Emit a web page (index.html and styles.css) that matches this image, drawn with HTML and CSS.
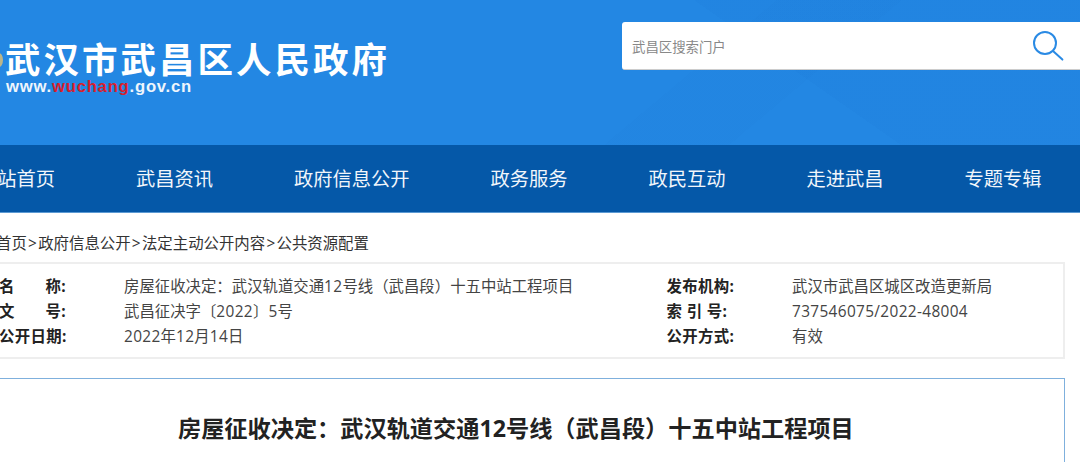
FILE: index.html
```html
<!DOCTYPE html>
<html lang="zh-CN">
<head>
<meta charset="utf-8">
<title>房屋征收决定</title>
<link rel="stylesheet" href="styles.css">
</head>
<body>
<header class="top">
  <div class="seal"></div>
  <div class="brand">
    <div class="brand-name">武汉市武昌区人民政府</div>
    <div class="brand-url">www.<span class="red">wuchang</span>.gov.cn</div>
  </div>
  <div class="search">
    <span class="search-text">武昌区搜索门户</span>
    <svg class="search-icon" width="32" height="32" viewBox="0 0 32 32" fill="none" stroke="#2a8ae4" stroke-linecap="round">
      <circle cx="12" cy="12" r="11" stroke-width="2"/>
      <path d="M20 20 L29.4 28.6" stroke-width="2"/>
    </svg>
  </div>
</header>
<nav class="nav">
  <a>网站首页</a><a>武昌资讯</a><a>政府信息公开</a><a>政务服务</a><a>政民互动</a><a>走进武昌</a><a>专题专辑</a>
</nav>
<div class="crumbs">首页<span class="sep">&gt;</span>政府信息公开<span class="sep">&gt;</span>法定主动公开内容<span class="sep">&gt;</span>公共资源配置</div>
<section class="info">
  <div class="info-row">
    <span class="label spread"><i>名</i><i>称:</i></span><span class="value">房屋征收决定：武汉轨道交通<span class="num">12</span>号线（武昌段）十五中站工程项目</span>
    <span class="label">发布机构:</span><span class="value">武汉市武昌区城区改造更新局</span>
  </div>
  <div class="info-row">
    <span class="label spread"><i>文</i><i>号:</i></span><span class="value">武昌征决字〔<span class="num">2022</span>〕<span class="num">5</span>号</span>
    <span class="label">索 引 号:</span><span class="value num">737546075/2022-48004</span>
  </div>
  <div class="info-row">
    <span class="label">公开日期:</span><span class="value"><span class="num">2022</span>年<span class="num">12</span>月<span class="num">14</span>日</span>
    <span class="label">公开方式:</span><span class="value">有效</span>
  </div>
</section>
<main class="article">
  <h1>房屋征收决定：武汉轨道交通12号线（武昌段）十五中站工程项目</h1>
</main>
</body>
</html>
```
FILE: styles.css
```css
html, body {
  margin: 0;
  padding: 0;
  width: 1080px;
  height: 462px;
  overflow: hidden;
  background: #fff;
  font-family: "Open Sans", "Noto Sans CJK SC", "Liberation Sans", sans-serif;
  color: #333;
}

.top {
  height: 145px;
  box-sizing: border-box;
  padding: 22px 0 0 5px;
  display: flex;
  gap: 235px;
  background:
    linear-gradient(140deg, transparent 62%, rgba(20, 100, 190, .04) 62%, rgba(20, 100, 190, .04) 72%, transparent 72%),
    linear-gradient(35deg, transparent 70%, rgba(10, 90, 190, .05) 70%),
    #2387e3;
}

.seal {
  position: absolute;
  left: -5px;
  top: 53px;
  width: 8px;
  height: 14px;
  border-radius: 50%;
  background: #b9b58a;
}

.brand {
  width: 382px;
  flex: none;
  padding-top: 16px;
}

.brand-name {
  font-family: "Noto Sans CJK SC", sans-serif;
  font-size: 35.5px;
  line-height: 40px;
  font-weight: 700;
  letter-spacing: 3px;
  color: #fff;
  white-space: nowrap;
}

.brand-url {
  font-family: "Liberation Sans", sans-serif;
  font-weight: 700;
  font-size: 16.7px;
  line-height: 18px;
  letter-spacing: .75px;
  color: #eef5fc;
  margin: 0 0 0 1px;
}

.red {
  color: #d81e2c;
}

.search {
  flex: none;
  width: 470px;
  height: 48px;
  box-sizing: border-box;
  background: #fff;
  border-radius: 3px;
  border-bottom: 1px solid #ccc;
  padding-left: 10px;
  display: flex;
  align-items: center;
  position: relative;
}

.search-text {
  font-size: 13.4px;
  color: #888;
}

.search-icon {
  position: absolute;
  left: 411px;
  top: 9px;
}

.nav {
  height: 68px;
  box-sizing: border-box;
  border-bottom: 1px solid #5c9ad3;
  background: #0558a8;
  display: flex;
  align-items: center;
  gap: 81px;
}

.nav a {
  flex: none;
  color: #f2f6fb;
  font-size: 19.25px;
  line-height: 26px;
}

.nav a:first-child {
  margin-left: -22px;
}

.crumbs {
  margin: 20px 0 0 -4px;
  font-size: 15.4px;
  line-height: 22px;
  color: #333;
  white-space: nowrap;
}

.sep {
  margin: 0 1.3px;
}

.info {
  box-sizing: border-box;
  width: 1095px;
  height: 97px;
  margin: 7px 0 0 -30px;
  border: 2px solid #eee;
  padding: 10px 0 0 27px;
}

.info-row {
  display: grid;
  grid-template-columns: 125px 542.6px 125.4px 1fr;
  font-size: 15.4px;
  line-height: 25px;
  white-space: nowrap;
}

.label {
  font-weight: 700;
  color: #222;
  letter-spacing: .35px;
}

.spread {
  display: flex;
  width: 67px;
  justify-content: space-between;
}

.spread i {
  font-style: normal;
}

.value {
  color: #444;
}

.num {
  letter-spacing: .35px;
}

.article {
  box-sizing: border-box;
  width: 1095px;
  height: 84px;
  margin: 19px 0 0 -30px;
  border: 1px solid #7fb0dd;
  border-bottom: 0;
  padding-left: 30px;
}

h1 {
  margin: 33px 0 0 177px;
  font-size: 23.2px;
  line-height: 32px;
  font-weight: 700;
  color: #222;
  white-space: nowrap;
}
```
